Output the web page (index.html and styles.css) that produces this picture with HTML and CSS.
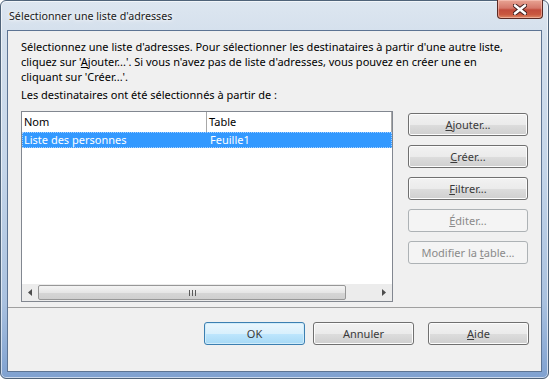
FILE: index.html
```html
<!DOCTYPE html>
<html lang="fr">
<head>
    <meta charset="UTF-8">
    <title>Sélectionner une liste d'adresses</title>
    <link rel="stylesheet" href="styles.css">
</head>
<body>
    <div class="window">
        <div class="titlebar">
            <span class="title">Sélectionner une liste d'adresses</span>
            <div class="close">
                <svg width="14" height="11" viewBox="0 0 14 11">
                    <path d="M2 1.5 L12 9.5 M12 1.5 L2 9.5" stroke="#3b1a1a" stroke-width="4.4" stroke-linecap="round"/>
                    <path d="M2 1.5 L12 9.5 M12 1.5 L2 9.5" stroke="#fff" stroke-width="2.6" stroke-linecap="round"/>
                </svg>
            </div>
        </div>
        <div class="client">
            <div class="intro">
                <p>Sélectionnez une liste d'adresses. Pour sélectionner les destinataires à partir d'une autre liste,<br>cliquez sur '<u>A</u>jouter...'. Si vous n'avez pas de liste d'adresses, vous pouvez en créer une en<br>cliquant sur 'Créer...'.</p>
                <p class="from">Les destinataires ont été sélectionnés à partir de :</p>
            </div>
            <div class="content">
                <div class="listview">
                    <div class="list-head">
                        <div class="col col-name">Nom</div>
                        <div class="col col-table">Table</div>
                    </div>
                    <div class="list-row selected">
                        <div class="col col-name">Liste des personnes</div>
                        <div class="col col-table">Feuille1</div>
                    </div>
                    <div class="list-body"></div>
                    <div class="hscroll">
                        <div class="arrow">
                            <svg width="4" height="7" viewBox="0 0 4 7"><path d="M4 0 L0 3.5 L4 7 Z" fill="#4d4d4d"/></svg>
                        </div>
                        <div class="thumb"><span class="grip"></span><span class="grip"></span><span class="grip"></span></div>
                        <div class="track"></div>
                        <div class="arrow">
                            <svg width="4" height="7" viewBox="0 0 4 7"><path d="M0 0 L4 3.5 L0 7 Z" fill="#4d4d4d"/></svg>
                        </div>
                    </div>
                </div>
                <div class="side-buttons">
                    <button class="btn"><u>A</u>jouter...</button>
                    <button class="btn"><u>C</u>réer...</button>
                    <button class="btn"><u>F</u>iltrer...</button>
                    <button class="btn" disabled><u>É</u>diter...</button>
                    <button class="btn" disabled>Modifier la <u>t</u>able...</button>
                </div>
            </div>
            <div class="footer">
                <button class="btn btn-default">OK</button>
                <button class="btn">Annuler</button>
                <button class="btn btn-help"><u>A</u>ide</button>
            </div>
        </div>
    </div>
</body>
</html>
```

FILE: styles.css
```css
body {
    margin: 0;
    width: 549px;
    height: 380px;
    overflow: hidden;
    background: #ffffff;
    font-family: 'Noto Sans', 'Open Sans', sans-serif;
    font-size: 11px;
    color: #000;
}
.window {
    box-sizing: border-box;
    width: 549px;
    height: 379px;
    border: 1px solid #4f6379;
    border-radius: 6px;
    background: linear-gradient(180deg, #dde6f0 0%, #d3dfec 10%, #c4d5e9 45%, #a9c1df 80%, #7fa1d0 100%);
    box-shadow: inset 0 0 0 1px rgba(255, 255, 255, 0.6);
    padding: 0 6px 6px 6px;
    display: flex;
    flex-direction: column;
}
.titlebar {
    height: 29px;
    display: flex;
    align-items: flex-start;
    justify-content: space-between;
}
.title {
    margin-top: 8px;
    margin-left: 2px;
    font-size: 10.7px;
    color: #1a1a1a;
    text-shadow: 0 0 6px #fff, 0 0 3px #fff;
}
.close {
    width: 46px;
    height: 19px;
    margin-top: -1px;
    margin-right: -1px;
    box-sizing: border-box;
    border: 1px solid #5a2a24;
    border-top: none;
    border-radius: 0 0 4px 4px;
    background: linear-gradient(180deg, #e8a494 0%, #d5786a 45%, #c24c3c 55%, #c9573f 80%, #dd8a66 100%);
    box-shadow: inset 0 0 0 1px rgba(255, 210, 200, 0.5);
    display: flex;
    align-items: center;
    justify-content: center;
}
.client {
    flex: 1;
    border: 1px solid #5d7493;
    background: #f0f0f0;
    display: flex;
    flex-direction: column;
}
.intro {
    padding: 8px 13px 0 13px;
}
.intro p {
    margin: 0;
    line-height: 15px;
}
.intro .from {
    margin-top: 3px;
}
.content {
    display: flex;
    margin-top: 9px;
    padding: 0 13px;
    gap: 15px;
}
.listview {
    width: 372px;
    height: 191px;
    box-sizing: border-box;
    border: 1px solid #828790;
    background: #fff;
    display: flex;
    flex-direction: column;
}
.list-head {
    height: 20px;
    display: flex;
    align-items: center;
}
.list-head .col {
    height: 20px;
    line-height: 19px;
    border-right: 1px solid #a8a8a8;
    box-sizing: border-box;
}
.col {
    padding-left: 2px;
    white-space: nowrap;
}
.col-name {
    width: 185px;
    box-sizing: border-box;
}
.col-table {
    flex: 1;
}
.list-row {
    height: 16px;
    line-height: 14px;
    display: flex;
    box-sizing: border-box;
}
.list-row.selected {
    background: #3399ff;
    color: #fff;
    border: 1px dotted #a6d0ff;
}
.list-row.selected .col-name {
    padding-left: 1px;
}
.list-body {
    flex: 1;
}
.hscroll {
    height: 17px;
    display: flex;
    background: #ececec;
}
.arrow {
    width: 16px;
    display: flex;
    align-items: center;
    justify-content: center;
}
.thumb {
    width: 308px;
    height: 15px;
    margin-top: 1px;
    box-sizing: border-box;
    border: 1px solid #979797;
    border-radius: 2px;
    background: linear-gradient(180deg, #f4f4f4 0%, #e6e6e6 50%, #d6d6d6 51%, #cfcfcf 100%);
    display: flex;
    align-items: center;
    justify-content: center;
    gap: 2px;
}
.grip {
    width: 1px;
    height: 6px;
    background: #5a5a5a;
}
.track {
    flex: 1;
}
.side-buttons {
    display: flex;
    flex-direction: column;
    gap: 9px;
    margin-top: 2px;
}
.btn {
    width: 120px;
    height: 23px;
    padding: 0;
    font-family: inherit;
    font-size: 11px;
    font-weight: normal;
    color: #3a3a3a;
    border: 1px solid #707070;
    border-radius: 3px;
    background: linear-gradient(180deg, #f2f2f2 0%, #ebebeb 50%, #dddddd 51%, #cfcfcf 100%);
    box-shadow: inset 0 0 0 1px #fcfcfc;
}
.btn:disabled {
    color: #8a8a8a;
    border-color: #adb2b5;
    background: #f4f4f4;
    box-shadow: none;
}
.footer {
    margin-top: auto;
    height: 49px;
    border-top: 1px solid #a0a0a0;
    display: flex;
    justify-content: flex-end;
    align-items: flex-start;
    padding: 14px 12px 0 0;
    gap: 8px;
}
.footer .btn {
    width: 101px;
}
.btn-help {
    margin-left: 6px;
}
.btn-default {
    border-color: #3c7fb1;
    background: linear-gradient(180deg, #eaf6fd 0%, #d9f0fc 50%, #bee6fd 51%, #a7d9f5 100%);
    box-shadow: inset 0 0 0 1px #d0ecfa;
}
```
